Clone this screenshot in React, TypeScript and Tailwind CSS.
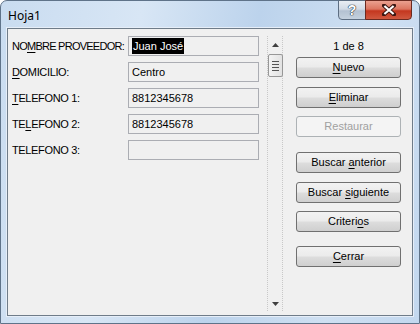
import React from "react";

const FONT = { fontFamily: "Tahoma, 'Liberation Sans', Arial, sans-serif" };

function Key({ children }: { children: React.ReactNode }) {
  return <span className="underline decoration-1 underline-offset-[2px]">{children}</span>;
}

const ROWS: { label: React.ReactNode; value: string; selected?: boolean; tight?: boolean }[] = [
  { label: <>NO<Key>M</Key>BRE PROVEEDOR:</>, value: "Juan José", selected: true, tight: true },
  { label: <><Key>D</Key>OMICILIO:</>, value: "Centro" },
  { label: <><Key>T</Key>ELEFONO 1:</>, value: "8812345678" },
  { label: <>TE<Key>L</Key>EFONO 2:</>, value: "8812345678" },
  { label: <>TELEFONO 3:</>, value: "" },
];

function Btn({ children, disabled, className = "" }: { children: React.ReactNode; disabled?: boolean; className?: string }) {
  return (
    <div
      className={
        "flex h-[21px] w-[105px] items-center justify-center rounded-[3px] border text-[11px] " +
        (disabled
          ? "border-[#adb2b5] bg-[#f4f4f4] text-[#a0a0a0] "
          : "border-[#707070] bg-[linear-gradient(#f2f2f2_0%,#ebebeb_48%,#dddddd_52%,#cfcfcf_100%)] text-black ") +
        className
      }
    >
      <span className="whitespace-pre">{children}</span>
    </div>
  );
}

export default function App() {
  return (
    <div className="h-[324px] w-[420px] overflow-hidden bg-white" style={FONT}>
      <div className="relative flex h-[324px] w-[420px] flex-col rounded-t-[7px] border border-[#5f7389] bg-[linear-gradient(100deg,#c9dcf0_0%,#d8e6f5_30%,#bcd3ec_55%,#cfe0f2_80%,#c3d8ef_100%)] px-[6px] pb-[7px]">
        {/* title bar */}
        <div className="flex h-[27px] shrink-0 items-center pl-[1px] pt-[2px]">
          <span className="text-[12px] text-black" style={{ fontFamily: "'Noto Sans', 'Liberation Sans', sans-serif" }}>
            Hoja1
          </span>
        </div>
        <div className="absolute right-[7px] top-[-1px] flex h-[20px]">
          <div className="flex w-[28px] items-center justify-center rounded-bl-[4px] border border-[#5d6e82] bg-[linear-gradient(#e9eef4_0%,#d2dbe6_45%,#b3c1d1_55%,#c4d1de_100%)]">
            <span className="text-[14px] font-bold leading-none text-white [text-shadow:0_0_1px_#1f2b38,0_0_1px_#1f2b38,0_0_1px_#1f2b38]" style={{ fontFamily: "'Liberation Sans', sans-serif" }}>
              ?
            </span>
          </div>
          <div className="-ml-[1px] flex w-[47px] items-center justify-center rounded-br-[4px] border border-[#6b2a20] bg-[linear-gradient(#eba190_0%,#dc7560_45%,#c4371f_55%,#d0583f_100%)]">
            <svg width="14" height="12" viewBox="0 0 14 12">
              <path d="M2 1.5 L12 10.5 M12 1.5 L2 10.5" stroke="#3a1510" strokeWidth="4" strokeLinecap="square" />
              <path d="M2.4 2 L11.6 10 M11.6 2 L2.4 10" stroke="#ffffff" strokeWidth="2.2" />
            </svg>
          </div>
        </div>

        {/* client area */}
        <div className="flex flex-1 border border-[#6f7c89] bg-[#f0f0f0] shadow-[0_0_0_1px_#e6eef8]">
          {/* fields */}
          <div className="flex flex-col gap-[6px] pl-[4px] pt-[7px]">
            {ROWS.map((r, i) => (
              <div key={i} className="flex h-[20px] items-center">
                <div className={"w-[116px] whitespace-nowrap text-[11px] text-black " + (r.tight ? "tracking-[-0.75px]" : "tracking-[-0.35px]")}>
                  {r.label}
                </div>
                <div className="flex h-[20px] w-[131px] items-center border border-[#abadb3] bg-[#f0f0f0] px-[3px] text-[11px] text-black">
                  {r.selected ? <span className="bg-black px-[1px] leading-[16px] text-white">{r.value}</span> : r.value}
                </div>
              </div>
            ))}
          </div>

          {/* scrollbar */}
          <div className="ml-[8px] mt-[7px] flex h-[275px] w-[16px] flex-col items-center border-x border-dotted border-[#c8c8c8]">
            <svg className="mt-[7px]" width="7" height="4" viewBox="0 0 7 4">
              <path d="M0 4 L3.5 0 L7 4 Z" fill="#404040" />
            </svg>
            <div className="mt-[7px] flex h-[23px] w-[15px] flex-col items-center justify-center gap-[2px] rounded-[2px] border border-[#979797] bg-[linear-gradient(90deg,#f3f3f3,#e2e2e2)]">
              <div className="h-px w-[7px] bg-[#555]" />
              <div className="h-px w-[7px] bg-[#555]" />
              <div className="h-px w-[7px] bg-[#555]" />
              <div className="h-px w-[7px] bg-[#555]" />
            </div>
            <div className="flex-1" />
            <svg className="mb-[5px]" width="7" height="4" viewBox="0 0 7 4">
              <path d="M0 0 L3.5 4 L7 0 Z" fill="#404040" />
            </svg>
          </div>

          {/* buttons */}
          <div className="ml-[13px] flex flex-col pt-[10px] text-black">
            <div className="flex h-[14px] w-[105px] items-center justify-center text-[11px]">1 de 8</div>
            <Btn className="mt-[4px]"><Key>N</Key>uevo</Btn>
            <Btn className="mt-[9px]"><Key>E</Key>liminar</Btn>
            <Btn disabled className="mt-[8px]">Restaurar</Btn>
            <Btn className="mt-[15px]">Buscar <Key>a</Key>nterior</Btn>
            <Btn className="mt-[9px]">Buscar <Key>s</Key>iguiente</Btn>
            <Btn className="mt-[8px]">Criteri<Key>o</Key>s</Btn>
            <Btn className="mt-[14px]"><Key>C</Key>errar</Btn>
          </div>
        </div>
      </div>
    </div>
  );
}
